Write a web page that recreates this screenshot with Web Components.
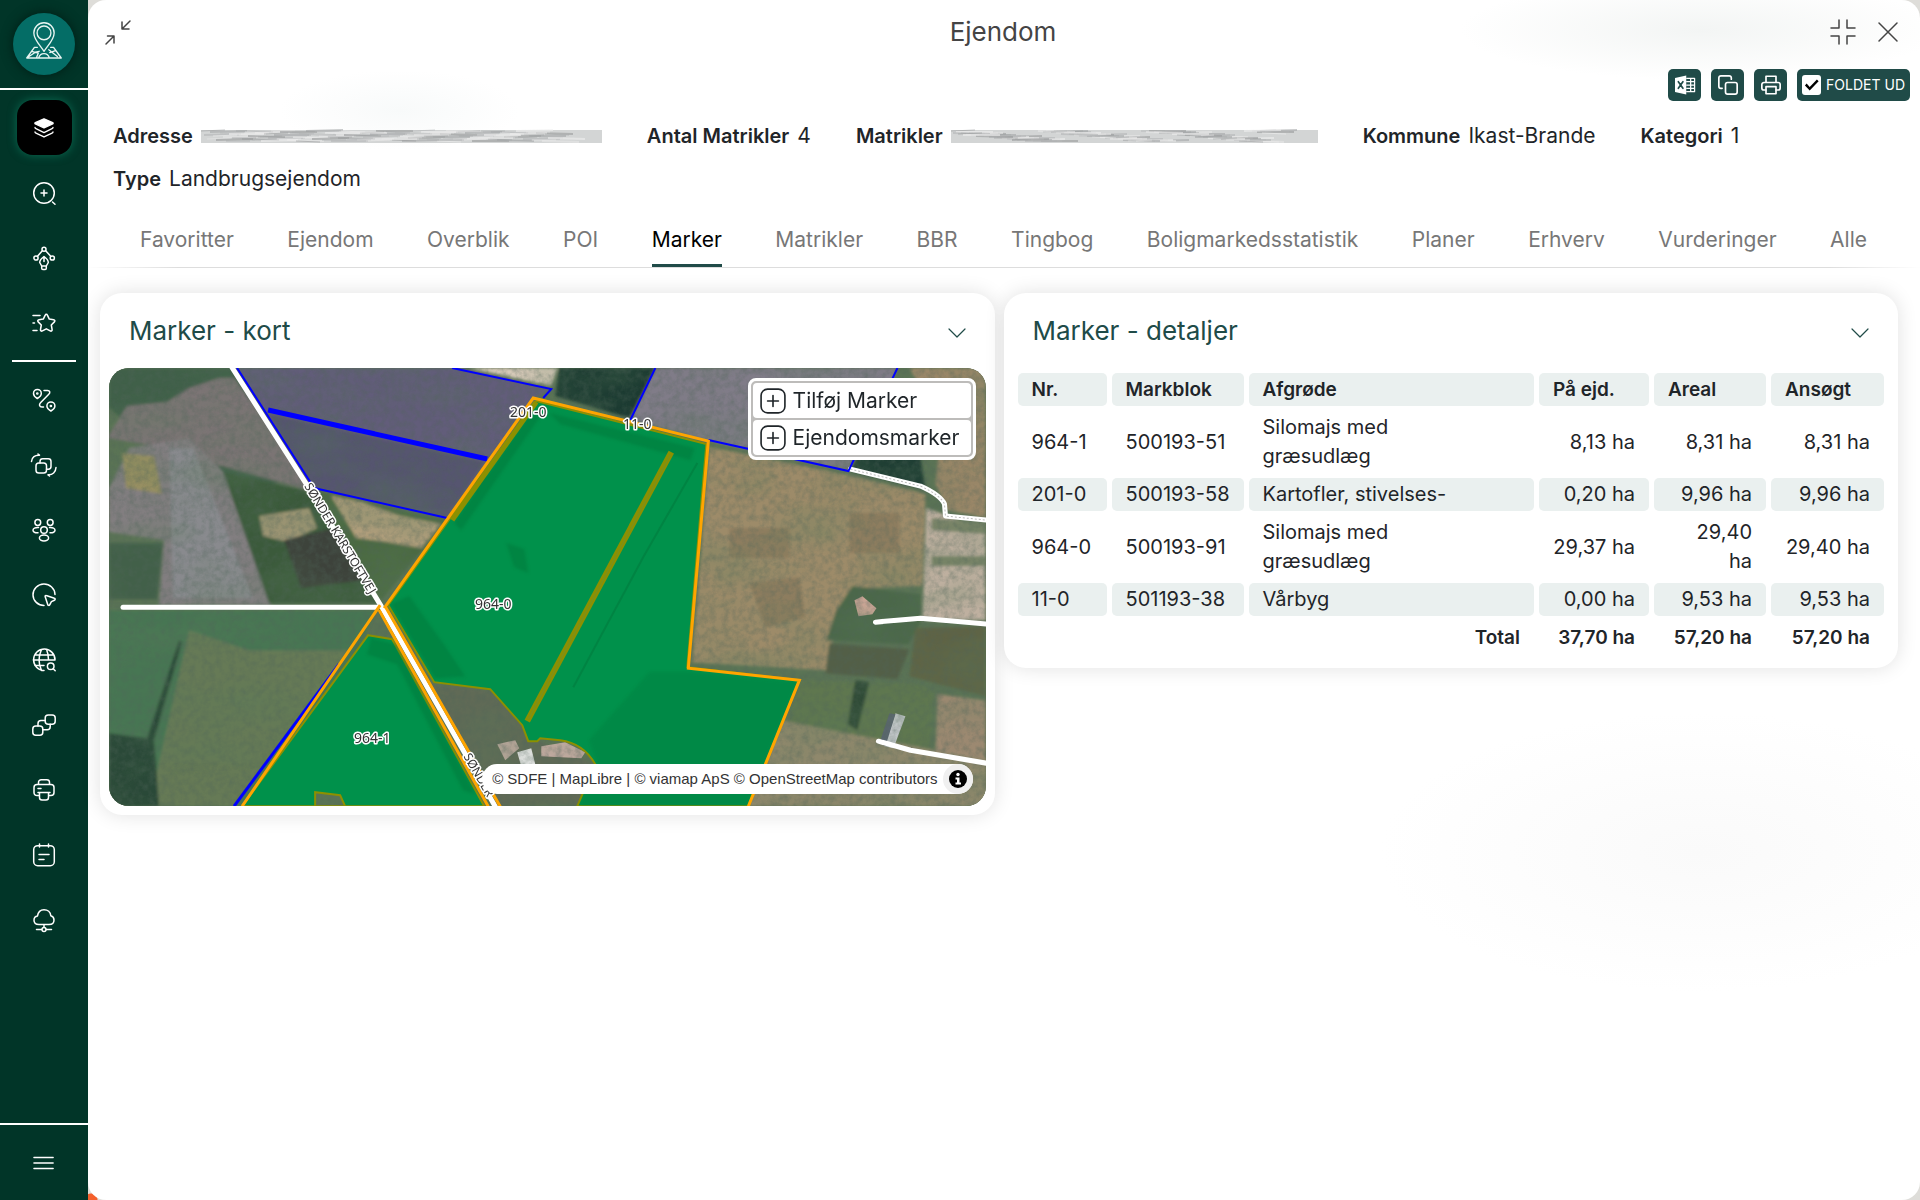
<!DOCTYPE html>
<html lang="da">
<head>
<meta charset="utf-8">
<meta name="viewport" content="width=device-width, initial-scale=1">
<title>Ejendom</title>
<style>
  body {
    margin: 0;
    font-family: Inter, "Open Sans", sans-serif;
    font-size: 20px;
    line-height: 30px;
    color: #1f2529;
  }
</style>
</head>
<body>
<property-app></property-app>

<script>
const ICONS = {
  logo: '<path d="M12 15.8C9.600 12.300 6.700 9.500 6.700 6.200a5.300 5.300 0 0 1 10.600 0c0 3.300-2.900 6.100-5.300 9.600z"/><circle cx="12" cy="6.200" r="3.600"/><path d="M8.500 13.800H7L3 19.300h18l-4-5.500h-1.500M3 19.300l4.500-3 2-.5M6 16l3 .8-1 2.500M9.200 19.300c.8-3 4.800-3 5.600 0M15 16.500l3-1M14.500 15l4.500 3.500"/>',
  layers: '<path fill="currentColor" d="M12 2l9.500 4.200c.6.300.6.900 0 1.200L12 11.800 2.500 7.400c-.6-.3-.6-.9 0-1.200z"/><path d="M2.200 11.500c0 .6.3 1 1 1.300L12 17l8.800-4.200c.7-.3 1-.7 1-1.300M2.200 16.300c0 .6.3 1 1 1.300L12 21.800l8.800-4.200c.7-.3 1-.7 1-1.300"/>',
  search: '<circle cx="12" cy="12" r="10.300"/><path d="M12 9v6M9 12h6M20.500 21l2.500 2.300"/>',
  pen: '<circle cx="12" cy="3.300" r="2"/><circle cx="4" cy="12" r="2.100"/><circle cx="20.300" cy="12" r="2.100"/><path d="M10.300 4.800L5.500 10.300M13.700 4.800l5 5.500M12 11v4.500M12 10.500c-2.300 1.700-4.300 4-4.300 6l2 3.500h4.600l2-3.500c0-2-2-4.300-4.300-6zM9.700 20v2.200c0 .8.500 1.300 1.200 1.300h2.200c.7 0 1.200-.5 1.200-1.300V20"/>',
  star: '<path d="M14.300 3.300c.5 0 .9.300 1.100.8l1.900 4 4.300.6c1.300.2 1.700 1.300.8 2.200L19.300 14l.8 4.500c.2 1.300-.8 2-1.900 1.400l-3.900-2.100-3.900 2.100c-1.100.6-2.100-.1-1.900-1.400l.8-4.500-3.100-3.100c-.9-.9-.5-2 .8-2.200l4.300-.6 1.900-4c.2-.5.600-.8 1.100-.8zM1 4.500h7M1 12h1.500M1 19.500h4"/>',
  route: '<path d="M5.300 10.500C3 9 1.500 7.500 1.500 5.400a3.900 3.900 0 0 1 7.800 0c0 2.100-1.700 3.600-4 5.100zM18.900 23c-2.300-1.500-4-3-4-5.100a4 4 0 0 1 8 0c0 2.100-1.700 3.600-4 5.100zM12 2.500h3.500c2.500 0 3 2.200 1.300 3.800l-8.300 8.400c-1.700 1.700-1.200 4.300 1.500 4.300h1.500"/><circle cx="5.300" cy="5.500" r=".6"/><circle cx="18.900" cy="18" r=".6"/>',
  swap: '<rect x="4" y="10" width="10.500" height="10" rx="2.800"/><path d="M8 10V8.500C8 7 9.200 5.800 10.700 5.800h5.600C17.800 5.800 19 7 19 8.500v5c0 1.500-1.200 2.700-2.700 2.700h-1.800M-.500 8.500C-.2 4.500 3 1.800 7.500 2.200L6 1M24 14.500c-.2 4.500-3.500 7.700-8 7.300l1.500 1.200"/>',
  people: '<circle cx="5.800" cy="4.500" r="2.900"/><circle cx="18.200" cy="4.500" r="2.900"/><circle cx="12" cy="12" r="3.300"/><ellipse cx="12" cy="20" rx="4.600" ry="2.900"/><path d="M6.500 9.500C3 9.300 1 10.500 1 12.200s2 2.800 5 2.600M17.500 9.500c3.500-.2 5.500 1 5.500 2.700s-2 2.800-5 2.600"/>',
  area: '<path d="M12 22.500A11 10.700 0 1 1 23 11.500M14.200 12.500l8.200 2.700c1 .3 1 1.600 0 2l-3 1.400-1.700 3.200c-.5.900-1.800.7-2-.3l-2.500-7.700c-.3-.9.200-1.600 1-1.300z"/>',
  globe: '<path d="M12 22.500A10.700 10.700 0 1 1 23 12M1.300 12H23M2.800 7h18.500M2.800 17.500H12M9.500 1.500c-3 6.500-3 14.500 0 21M14.500 1.500c1.400 3.200 2 6.500 2 10"/><circle cx="18.700" cy="18.300" r="3.300"/><path d="M21.200 20.800l2 2"/>',
  squares: '<rect x=".8" y="13" width="10" height="9.300" rx="3"/><rect x="13.200" y="2" width="10" height="9.300" rx="3"/><path d="M6 13v-2.500c0-1.700 1.300-3 3-3h4.200M18.200 11.300v2.500c0 1.700-1.300 3-3 3h-4.400"/>',
  printer: '<path d="M6.500 6.500V4.300C6.500 2.800 7.700 1.700 9.200 1.700h5.600c1.500 0 2.700 1.100 2.700 2.600v2.200M6.500 17.500H5c-1.800 0-3-1.200-3-3v-5c0-1.800 1.200-3 3-3h14c1.800 0 3 1.200 3 3v5c0 1.800-1.200 3-3 3h-1.500M6 14.500h12M6 10.500h3M7.500 14.500v5c0 1.500 1 2.500 2.500 2.500h4c1.500 0 2.500-1 2.500-2.500v-5"/>',
  note: '<rect x="1.700" y="2.700" width="20.600" height="20" rx="4"/><path d="M7.500 1v3M16.500 1v3M7 11.500h10M7 16.500h5"/>',
  cloud: '<path d="M7 16.500c-3 0-5-1.800-5-4.300C2 9.800 3.500 8.300 5.500 8 6 4.300 8.500 1.700 12 1.700c3.700 0 6.500 2.500 6.800 6 2 .5 3.200 2 3.200 4.200 0 2.800-2 4.600-5 4.600zM12 16.500v3M4.500 21.500h5M14.500 21.500h5"/><circle cx="12" cy="21.500" r="2"/>',
  menu: '<path d="M1 6h21M1 12h21M1 18h21"/>',
  collapse: '<path d="M24 1l-8 8M16 2v7h7M0 24l8-8M1.500 16H8v7"/>',
  shrink: '<path d="M8 0v8H0M16 0v8h8M8 24v-8H0M16 24v-8h8"/>',
  close: '<path d="M3 3l18 18M21 3L3 21"/>',
  chevron: '<path d="M4 8l8 8 8-8"/>',
  excel: '<path fill="currentColor" stroke="none" d="M0 3.500l13.500-3v23L0 20.500z"/><path d="M14 4h9.500v16H14M14 8h9M14 12h9M14 16h9M18.800 4v16"/><path stroke="#204b48" stroke-width="2" d="M4 8l5.500 8M9.500 8L4 16"/>',
  copy: '<rect x="9" y="9" width="14" height="14" rx="2.500"/><path d="M5 16H3.500A2.500 2.500 0 0 1 1 13.500v-10A2.500 2.500 0 0 1 3.500 1h10A2.500 2.500 0 0 1 16 3.500V5"/>',
  print: '<path d="M6 9V1.500h12V9M6 18H3.500A2.500 2.500 0 0 1 1 15.500v-4A2.500 2.500 0 0 1 3.500 9h17a2.500 2.500 0 0 1 2.500 2.500v4a2.500 2.500 0 0 1-2.500 2.500H18"/><rect x="6" y="14" width="12" height="8.500"/>',
  plus: '<rect x="1" y="1" width="22" height="22" rx="6"/><path d="M12 7v10M7 12h10"/>'
};

class UiIcon extends HTMLElement {
  constructor() {
    super();
    this.attachShadow({ mode: 'open' });
  }

  connectedCallback() {
    this.shadowRoot.innerHTML = `
      <style>
        :host {
          display: inline-block;
          flex: none;
          width: var(--size, 24px);
          height: var(--size, 24px);
        }
        svg {
          display: block;
          width: 100%;
          height: 100%;
          overflow: visible;
        }
      </style>
      <svg viewBox="0 0 24 24" fill="none" stroke="currentColor" stroke-width="${this.getAttribute('stroke') || 1.5}"
        stroke-linecap="round" stroke-linejoin="round" aria-hidden="true">${ICONS[this.getAttribute('name')]}</svg>
    `;
  }
}

class SideBar extends HTMLElement {
  constructor() {
    super();
    this.attachShadow({ mode: 'open' });
    const item = (name, label) => `<button aria-label="${label}"><ui-icon name="${name}"></ui-icon></button>`;
    this.shadowRoot.innerHTML = `
      <style>
        :host {
          display: flex;
          flex-direction: column;
          flex: none;
          width: 88px;
          background: #013528;
          color: #fff;
        }
        .logo {
          display: flex;
          align-items: center;
          justify-content: center;
          height: 88px;
          border-bottom: 2px solid #fff;
        }
        .logo a {
          display: flex;
          align-items: center;
          justify-content: center;
          width: 62px;
          height: 62px;
          border-radius: 50%;
          background: #046d66;
          color: #e8f5f2;
          box-shadow: 0 0 12px #001d15;
          --size: 46px;
        }
        nav {
          flex: 1;
          padding-top: 5px;
        }
        button {
          display: flex;
          align-items: center;
          justify-content: center;
          width: 100%;
          height: 65px;
          padding: 0;
          border: 0;
          background: none;
          color: inherit;
        }
        .active ui-icon {
          --size: 22px;
        }
        .tile {
          display: flex;
          align-items: center;
          justify-content: center;
          width: 55px;
          height: 55px;
          border-radius: 16px;
          background: #000;
          box-shadow: 0 0 10px #0a6b52;
        }
        hr {
          height: 2px;
          margin: 5px 12px;
          border: 0;
          background: #fff;
        }
        footer {
          display: flex;
          align-items: center;
          height: 75px;
          border-top: 2px solid #fff;
          --size: 22px;
        }
      </style>
      <div class="logo"><a href="#" aria-label="Forside"><ui-icon name="logo" stroke="0.7"></ui-icon></a></div>
      <nav>
        <button class="active" aria-label="Lag"><span class="tile"><ui-icon name="layers"></ui-icon></span></button>
        ${item('search', 'Søg')}${item('pen', 'Tegn')}${item('star', 'Favoritter')}
        <hr>
        ${item('route', 'Rute')}${item('swap', 'Skift')}${item('people', 'Naboer')}${item('area', 'Område')}${item('globe', 'Kortsøgning')}${item('squares', 'Sammenlign')}${item('printer', 'Udskriv')}${item('note', 'Noter')}${item('cloud', 'Tjenester')}
      </nav>
      <footer><button aria-label="Menu"><ui-icon name="menu" stroke="1.5"></ui-icon></button></footer>
    `;
  }
}

class PanelHeader extends HTMLElement {
  constructor() {
    super();
    this.attachShadow({ mode: 'open' });
    this.shadowRoot.innerHTML = `
      <style>
        :host {
          display: block;
        }
        .top {
          display: grid;
          grid-template-columns: 1fr auto 1fr;
          align-items: center;
          height: 63px;
          padding: 0 20px 0 18px;
          color: #444;
        }
        h1 {
          margin: 0;
          font-size: 26px;
          font-weight: 400;
        }
        .window {
          display: flex;
          justify-content: flex-end;
          gap: 21px;
        }
        button {
          display: flex;
          align-items: center;
          justify-content: center;
          padding: 0;
          border: 0;
          background: none;
          color: inherit;
        }
        .tools {
          display: flex;
          justify-content: flex-end;
          gap: 10px;
          padding: 6px 10px 0 0;
          --size: 20px;
        }
        .tools button, label {
          width: 33px;
          height: 32px;
          border-radius: 5px;
          background: #204b48;
          color: #fff;
        }
        label {
          display: flex;
          align-items: center;
          box-sizing: border-box;
          gap: 5px;
          width: auto;
          padding: 0 5px;
          font-size: 14px;
          white-space: nowrap;
        }
        input {
          appearance: none;
          width: 19px;
          height: 20px;
          margin: 0;
          border-radius: 3px;
          background: #fff;
        }
        input:checked::before {
          content: "";
          display: block;
          height: 100%;
          background: #000;
          clip-path: polygon(15% 52%, 24% 43%, 40% 60%, 78% 22%, 87% 31%, 40% 78%);
        }
      </style>
      <div class="top">
        <button style="justify-self: start" aria-label="Minimer"><ui-icon name="collapse" stroke="1.5"></ui-icon></button>
        <h1>Ejendom</h1>
        <div class="window">
          <button aria-label="Formindsk"><ui-icon name="shrink"></ui-icon></button>
          <button aria-label="Luk"><ui-icon name="close"></ui-icon></button>
        </div>
      </div>
      <div class="tools">
        <button aria-label="Excel"><ui-icon name="excel"></ui-icon></button>
        <button aria-label="Kopier"><ui-icon name="copy" stroke="2"></ui-icon></button>
        <button aria-label="Udskriv"><ui-icon name="print" stroke="2"></ui-icon></button>
        <label><input type="checkbox" checked>FOLDET UD</label>
      </div>
    `;
  }
}

class PropertyFacts extends HTMLElement {
  constructor() {
    super();
    this.attachShadow({ mode: 'open' });
    // values that are not shown are replaced by a smudge of horizontal streaks
    const smudge = (width) => {
      let streaks = '';
      for (let i = 0; i < 110; i++) {
        const x = (i * 67) % (width - 50);
        const y = 3 + (i * 7) % 11;
        const tone = ['#999b9c', '#b5b7b8', '#e8e8e8', '#a5a8a9', '#f0f0f0'][i % 5];
        streaks += `<path d="M${x} ${y}l${24 + (i * 13) % 26} ${i % 3 - 1}" stroke="${tone}" stroke-width="${1 + i % 2}" opacity=".6"/>`;
      }
      return `<svg width="${width}" height="16" aria-hidden="true"><rect width="${width}" height="13" y="2" fill="#d3d5d5"/>${streaks}</svg>`;
    };
    const facts = [
      ['Adresse', smudge(401)],
      ['Antal Matrikler', '4'],
      ['Matrikler', smudge(367)],
      ['Kommune', 'Ikast-Brande'],
      ['Kategori', '1'],
      ['Type', 'Landbrugsejendom']
    ];
    this.shadowRoot.innerHTML = `
      <style>
        :host {
          display: block;
        }
        dl {
          display: flex;
          flex-wrap: wrap;
          gap: 13px 45px;
          margin: 0;
          padding: 20px 25px 0;
        }
        div {
          display: flex;
          align-items: center;
          gap: 8px;
        }
        dt {
          font-weight: 600;
        }
        dd {
          margin: 0;
          font-size: 21px;
        }
        svg {
          display: block;
        }
      </style>
      <dl>${facts.map(([name, value]) => `<div><dt>${name}</dt><dd>${value}</dd></div>`).join('')}</dl>
    `;
  }
}

class TabBar extends HTMLElement {
  constructor() {
    super();
    this.attachShadow({ mode: 'open' });
    const tabs = ['Favoritter', 'Ejendom', 'Overblik', 'POI', 'Marker', 'Matrikler', 'BBR', 'Tingbog',
      'Boligmarkedsstatistik', 'Planer', 'Erhverv', 'Vurderinger', 'Alle'];
    this.shadowRoot.innerHTML = `
      <style>
        :host {
          display: flex;
          justify-content: space-between;
          margin-top: 20px;
          padding: 0 53px 0 52px;
          border-bottom: 1px solid;
          border-image: linear-gradient(90deg, transparent, #ddd 5%, #ddd 95%, transparent) 1;
          font-size: 21px;
        }
        button {
          height: 53px;
          padding: 0 0 2px;
          border: 0;
          background: none;
          color: #777;
          font: inherit;
        }
        .active {
          color: #000;
          background: linear-gradient(#204b48, #204b48) bottom / 100% 3px no-repeat;
        }
      </style>
      ${tabs.map((tab) => `<button role="tab"${tab === 'Marker' ? ' class="active" aria-selected="true"' : ''}>${tab}</button>`).join('')}
    `;
  }
}

class InfoCard extends HTMLElement {
  constructor() {
    super();
    this.attachShadow({ mode: 'open' });
    this.shadowRoot.innerHTML = `
      <style>
        :host {
          display: block;
          padding: 0 9px 9px;
          border-radius: 22px;
          background: #fff;
          box-shadow: 0 0 20px rgba(0, 0, 0, .12);
        }
        header {
          display: flex;
          align-items: center;
          justify-content: space-between;
          height: 75px;
          padding: 0 17px 0 20px;
          color: #204b48;
        }
        h2 {
          margin: 0;
          font-size: 26px;
          font-weight: 400;
        }
        button {
          display: flex;
          margin: 5px 0 0;
          padding: 0;
          border: 0;
          background: none;
          color: inherit;
        }
      </style>
      <header>
        <h2></h2>
        <button aria-label="Fold ind"><ui-icon name="chevron" stroke="1.2"></ui-icon></button>
      </header>
      <slot></slot>
    `;
  }

  connectedCallback() {
    this.shadowRoot.querySelector('h2').textContent = this.getAttribute('heading');
  }
}

class FieldMap extends HTMLElement {
  constructor() {
    super();
    this.attachShadow({ mode: 'open' });
    this.shadowRoot.innerHTML = `
      <style>
        :host {
          display: block;
          position: relative;
          overflow: hidden;
          aspect-ratio: 2 / 1;
          border-radius: 20px;
          background: #5d6b4f;
        }
        svg {
          display: block;
          width: 100%;
          height: 100%;
        }
        .field {
          fill: #00914b;
          stroke: #8d9000;
          stroke-width: 2;
        }
        .blue {
          fill: none;
          stroke: #00f;
          stroke-width: 2;
        }
        .orange {
          fill: none;
          stroke: #ffa500;
          stroke-width: 3;
        }
        .road {
          fill: none;
          stroke: #fff;
          stroke-width: 5;
          stroke-linecap: round;
          stroke-linejoin: round;
        }
        text {
          font-family: "Noto Sans", sans-serif;
          font-size: 14px;
          text-anchor: middle;
          fill: #333;
          stroke: #fff;
          stroke-width: 3;
          stroke-linejoin: round;
          paint-order: stroke;
        }
        .street {
          font-size: 12px;
          text-anchor: start;
        }
        .layers {
          position: absolute;
          top: 10px;
          right: 10px;
          display: flex;
          flex-direction: column;
          gap: 2px;
          padding: 2px;
          border: 3px solid #fff;
          border-radius: 8px;
          background: #bdbcba;
        }
        button {
          display: flex;
          align-items: center;
          gap: 7px;
          height: 35px;
          padding: 0 11px 0 7px;
          border: 0;
          border-radius: 4px;
          background: #fff;
          color: #1f2529;
          font: inherit;
          font-size: 21px;
          --size: 26px;
        }
        .credits {
          position: absolute;
          right: 13px;
          bottom: 12px;
          display: flex;
          align-items: center;
          gap: 5px;
          height: 30px;
          padding-left: 10px;
          border-radius: 15px;
          background: #fff;
          color: #333;
          font: 15px/30px "Liberation Sans", Arial, sans-serif;
          white-space: pre;
        }
        .credits a {
          color: inherit;
          text-decoration: none;
        }
        .info {
          display: block;
          width: 30px;
          height: 30px;
        }
      </style>
      <svg viewBox="0 0 876 438" preserveAspectRatio="xMidYMid slice" role="img" aria-label="Kort over marker">
        <defs>
          <filter id="grain" x="0" y="0" width="100%" height="100%">
            <feTurbulence type="fractalNoise" baseFrequency=".15" numOctaves="4" seed="4"/>
            <feColorMatrix values="0 0 0 0 .08  0 0 0 0 .13  0 0 0 0 .1  1.800 0 0 0 -.65"/>
          </filter>
          <filter id="patches" x="0" y="0" width="100%" height="100%">
            <feTurbulence type="fractalNoise" baseFrequency=".012 .025" numOctaves="4" seed="9"/>
            <feColorMatrix values="0 0 0 0 .1  0 0 0 0 .2  0 0 0 0 .1  1.800 0 0 0 -.7"/>
          </filter>
          <filter id="soft" x="-5%" y="-5%" width="110%" height="110%"><feGaussianBlur stdDeviation="1.500"/></filter>
        </defs>
        <rect width="876" height="438" fill="#5b7355"/>
        <g filter="url(#soft)">
          <path fill="#41604a" d="M0 0h125l60 110-80 20L0 40z"/>
          <path fill="#7d7576" d="M18 38l40-4 22-14 30-10 15 0 16 22 66 92-94-26-50-8-5-10-60-10z"/>
          <path fill="#827e80" d="M0 120l20-40 60-10 34 34 40 90 8 43H50l5-65L0 164z"/>
          <path fill="#8e9297" opacity=".6" d="M60 80l24 0 60 150h-80z"/>
          <path fill="#978f62" d="M13 85l32 3 8 38-36-6z"/>
          <path fill="#43604a" d="M0 175h54l-6 56H0z"/>
          <path fill="#3a5a3b" d="M114 104l80 18 10 8 65 105H160z"/>
          <path fill="#4b6b42" d="M204 122l134 30-66 80z"/>
          <path fill="#9c9473" d="M150 148l50-8 8 20-30 14-24-6z"/>
          <path fill="#b09e7b" d="M222 128l30 6 40 14 40 8-20 24-35-6-30-4z"/>
          <path fill="#3e433b" d="M175 172l50-12 32 52-65 8z"/>
          <path fill="#477652" d="M0 242h266l-20 50-110 145H0z"/>
          <path fill="#667a57" d="M80 262l60 20 100 0-115 156H40z"/>
          <path fill="#2c4a38" d="M0 365l38 5 32-98 3 2-28 98 5 66H0z"/>
          <path fill="#625d7a" d="M125 0h225l92 21-18 10-87 120-134-31z"/>
          <path fill="#575470" d="M159 46l216 48-38 57-134-31z"/>
          <path fill="#d6c9b8" d="M360 0h88l-6 18z"/>
          <path fill="#1b3a33" d="M450 0h98l-28 50-74-22z"/>
          <path fill="#807b88" d="M546 0h242l-49 103-140-30-78-21z"/>
          <path fill="#9a8768" d="M800 0h76v150l-38-8-12-26 6-60z"/>
          <path fill="#1d3a30" d="M776 25l26 10 14 86-75-18z"/>
          <path fill="#9d8b69" d="M600 79l139 28 77 19-3 92-70 2-15 25-10 57-135-8z"/>
          <path fill="#7d6f56" opacity=".5" d="M620 160h60v30h-60zM740 145h50v40h-50zM640 215l50-6 6 40-40 10z"/>
          <path fill="#bfb0a0" d="M817 140l59 22v90h-63z"/>
          <path fill="#7b8569" d="M822 150l54 4v12l-54-4zM822 188h54v10h-54z"/>
          <path fill="#4b6848" d="M743 218l68 8v28l-12 22-82-4 10-30z"/>
          <path fill="#525f47" d="M720 275l80 6-12 30-72-6z"/>
          <path fill="#5f6345" d="M806 260l70-2v70l-76-20z"/>
          <path fill="#5f7750" d="M690 312l120 4 14 8-4 62-50 0-92-20z"/>
          <path fill="#9c8971" d="M828 326l48 6v62l-50-8z"/>
          <path fill="#8f886c" d="M672 352l205 40v46H639z"/>
          <path fill="#2e4a36" d="M746 312l14 2-12 48-10-6z"/>
          <path fill="#616a57" d="M325 316l57 6 50 52 55 22-18 42H390l-76-122z"/>
        </g>
        <g>
          <path fill="#c9a595" d="M745 232l8-4 14 12-4 6-14 2z"/>
          <path fill="#c5c9cc" d="M786 345l10 3-12 32-9-2z"/>
          <path fill="#5b6670" d="M780 345l6 1-10 32-6-3z"/>
          <path fill="#c1aaa0" d="M388 376l18-4 4 8-14 12zM432 378l24-4 20 10-4 6-40-2z"/>
          <path fill="#e4e4e4" d="M408 384l14-4 4 16-14 2z"/>
        </g>
        <rect width="876" height="438" filter="url(#patches)" opacity=".35"/>
        <rect width="876" height="438" filter="url(#grain)" opacity=".4"/>

        <path class="field" d="M427 33L597 76 578 299 690 312 639 438H468L486 396Q474 375 451 372L431 370 428 373H419L413 357 381 321 325 314 279 237 341 150z"/>
        <path class="field" fill-rule="evenodd" d="M259 267l24 4 92 167H133zM206 438v-14l25 3 5 11z"/>
        <g fill="#00783a" filter="url(#soft)" opacity=".5">
          <path d="M345 155l80-115 5 10-78 112zM440 45l145 35-4 12-130-36zM282 236l44 74 30-2-20-30-36-50z"/>
          <path d="M480 372l60-68 40 0 108 10-50 124H470l18-42z" opacity=".6"/>
          <path d="M262 270l24 6 80 150-12-4-66-126-30-10zM370 108l16 0-8 14-14 2zM397 175l18 6 4 24-14-6z"/>
        </g>
        <path d="M588 95l-54 94-70 130" stroke="#00773c" stroke-width="2" fill="none" opacity=".5"/>
        <path d="M427 34l-84 118" stroke="#8d9000" stroke-width="5"/>
        <path d="M562 84L418 353" stroke="#8d9000" stroke-width="6"/>
        <path d="M561 87L419 351" stroke="#7a8f20" stroke-width="1"/>

        <path class="road" d="M14 239h254"/>
        <path class="road" d="M122-2L203 125 272 238 387 440"/>
        <path class="road" d="M766 254l45-4 66 6M769 373l32 9 76 13"/>
        <path class="road" d="M741 101l70 17q20 9 24 18l1 12 41 4"/>
        <path d="M741 101l70 17q20 9 24 18l1 12 41 4" fill="none" stroke="#bbb" stroke-width="1" stroke-dasharray="2 2"/>

        <path class="blue" d="M128 0L205 120 338 150M434 30l8-9L343 0M546 0L521 52M599 72l140 31L788 0"/>
        <path d="M159 42l219 49" stroke="#00f" stroke-width="5"/>
        <path d="M230 296L125 438" stroke="#00f" stroke-width="3"/>
        <path class="orange" d="M275 240L424 30 599 73 579 300 690 312 639 438M271 237L133 438M270 242l110 198M276 238l116 202"/>

        <text x="419" y="49">201-0</text>
        <text x="528" y="61">11-0</text>
        <text x="384" y="241">964-0</text>
        <text x="263" y="375">964-1</text>
        <text class="street" transform="translate(195 118) rotate(59)">SØNDER KARSTOFTVEJ</text>
        <text class="street" transform="translate(354 388) rotate(60)">SØNDER</text>
      </svg>
      <div class="layers">
        <button><ui-icon name="plus"></ui-icon>Tilføj Marker</button>
        <button><ui-icon name="plus"></ui-icon>Ejendomsmarker</button>
      </div>
      <div class="credits"><span>© SDFE | <a href="#">MapLibre</a> | <a href="#">© viamap ApS</a> <a href="#">© OpenStreetMap contributors</a></span><svg class="info" viewBox="0 0 30 30" aria-hidden="true"><circle cx="15" cy="15" r="15" fill="#f0f0f0"/><circle cx="15" cy="15" r="9"/><circle cx="15" cy="10.500" r="1.700" fill="#fff"/><path d="M12.500 13.500h4v5h1.500v2h-5.500v-2H14v-3h-1.500z" fill="#fff"/></svg></div>
    `;
  }
}

class FieldTable extends HTMLElement {
  constructor() {
    super();
    this.attachShadow({ mode: 'open' });
    const rows = [
      ['964-1', '500193-51', 'Silomajs med<br>græsudlæg', '8,13 ha', '8,31 ha', '8,31 ha'],
      ['201-0', '500193-58', 'Kartofler, stivelses-', '0,20 ha', '9,96 ha', '9,96 ha'],
      ['964-0', '500193-91', 'Silomajs med<br>græsudlæg', '29,37 ha', '29,40<br>ha', '29,40 ha'],
      ['11-0', '501193-38', 'Vårbyg', '0,00 ha', '9,53 ha', '9,53 ha']
    ];
    this.shadowRoot.innerHTML = `
      <style>
        :host {
          display: block;
        }
        table {
          width: 100%;
          table-layout: fixed;
          border-spacing: 5px;
          font-size: 20px;
          line-height: 29px;
          white-space: nowrap;
        }
        th, td {
          padding: 2px 14px;
          border-radius: 5px;
          text-align: left;
        }
        th {
          font-size: 19px;
          font-weight: 600;
        }
        thead th, tbody tr:nth-child(even) td {
          background: #eaf0ef;
        }
        td:nth-child(n+4), tfoot th {
          text-align: right;
        }
        thead th:nth-child(1) { width: 61px; }
        thead th:nth-child(2) { width: 104px; }
        thead th:nth-child(4) { width: 82px; }
        thead th:nth-child(5) { width: 84px; }
        thead th:nth-child(6) { width: 85px; }
      </style>
      <table>
        <thead>
          <tr>${['Nr.', 'Markblok', 'Afgrøde', 'På ejd.', 'Areal', 'Ansøgt'].map((name) => `<th scope="col">${name}</th>`).join('')}</tr>
        </thead>
        <tbody>
          ${rows.map((row) => `<tr>${row.map((cell) => `<td>${cell}</td>`).join('')}</tr>`).join('')}
        </tbody>
        <tfoot>
          <tr><th colspan="3" scope="row">Total</th><th>37,70 ha</th><th>57,20 ha</th><th>57,20 ha</th></tr>
        </tfoot>
      </table>
    `;
  }
}

class PropertyApp extends HTMLElement {
  constructor() {
    super();
    this.attachShadow({ mode: 'open' });
    this.shadowRoot.innerHTML = `
      <style>
        :host {
          display: flex;
          min-height: 100vh;
          background: radial-gradient(circle at 91px 100%, #f4602c 6px, transparent 7px), #deddd9;
        }
        main {
          flex: 1;
          min-width: 0;
          border-radius: 18px;
          background:
            radial-gradient(ellipse 240px 50px at 88% 30px, #f3f5f4, transparent),
            radial-gradient(ellipse 320px 140px at 88% 71%, #fafafa, transparent),
            radial-gradient(ellipse 120px 40px at 17% 110px, #f8fafa, transparent),
            #fff;
        }
        .cards {
          display: grid;
          grid-template-columns: 1fr 1fr;
          align-items: start;
          gap: 9px;
          padding: 25px 22px 25px 12px;
        }
      </style>
      <side-bar></side-bar>
      <main>
        <panel-header></panel-header>
        <property-facts></property-facts>
        <tab-bar role="tablist"></tab-bar>
        <div class="cards">
          <info-card heading="Marker - kort"><field-map></field-map></info-card>
          <info-card heading="Marker - detaljer"><field-table></field-table></info-card>
        </div>
      </main>
    `;
  }
}

customElements.define('ui-icon', UiIcon);
customElements.define('side-bar', SideBar);
customElements.define('panel-header', PanelHeader);
customElements.define('property-facts', PropertyFacts);
customElements.define('tab-bar', TabBar);
customElements.define('info-card', InfoCard);
customElements.define('field-map', FieldMap);
customElements.define('field-table', FieldTable);
customElements.define('property-app', PropertyApp);
</script>
</body>
</html>
